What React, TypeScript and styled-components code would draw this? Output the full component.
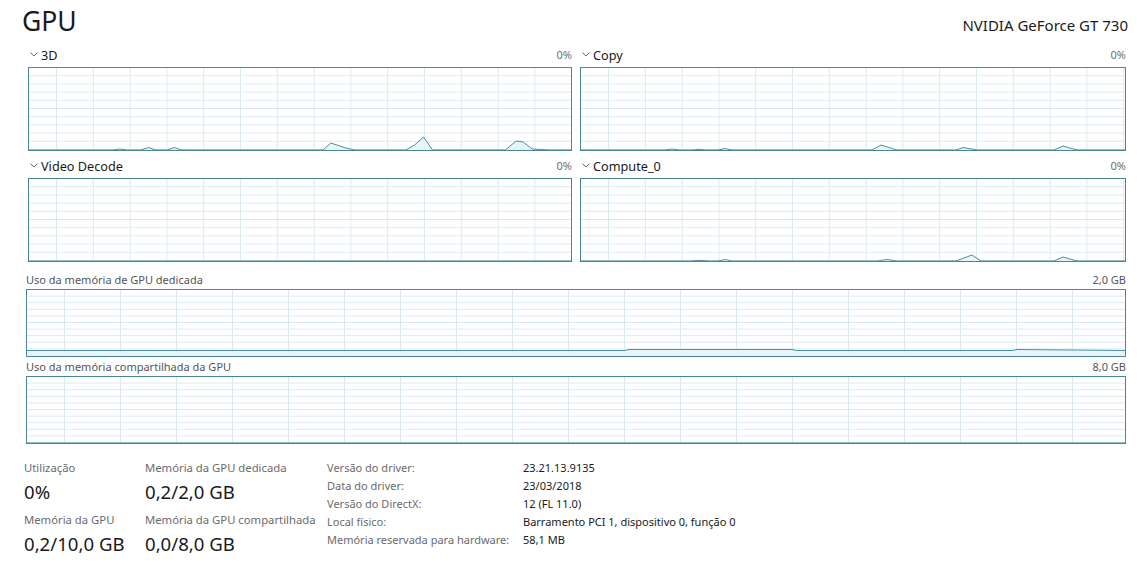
import React from 'react';
import styled, { createGlobalStyle } from 'styled-components';

const GlobalStyle = createGlobalStyle`
  html, body {
    margin: 0;
    padding: 0;
    background: #fff;
  }
  body {
    font-family: 'Segoe UI', 'Noto Sans', 'Open Sans', sans-serif;
    color: #1a1a1a;
  }
`;

const LINE = '#4f8d9c';
const BORDER = '#4a8794';
const GRID = '#dbe9ee';
const FILL = '#e3f3f7';

const Page = styled.div`
  width: 1137px;
  height: 585px;
  box-sizing: border-box;
  padding: 0 11px 0 22px;
  overflow: hidden;
`;

const Header = styled.div`
  display: flex;
  justify-content: space-between;
  align-items: flex-end;
  height: 38px;
  padding-top: 2px;
  box-sizing: border-box;
`;

const Title = styled.h1`
  margin: 0;
  font-size: 26.5px;
  line-height: 34px;
  font-weight: 400;
`;

const DeviceName = styled.div`
  font-size: 15px;
  line-height: 20px;
  margin: 0 -2px 3px 0;
  color: #1a1a1a;
`;

const EngineGrid = styled.div`
  display: grid;
  grid-template-columns: 544px 1fr;
  column-gap: 8px;
  row-gap: 6px;
  margin: 8px 0 0 6px;
`;

const Engine = styled.div`
  display: flex;
  flex-direction: column;
`;

const EngineHead = styled.div`
  display: flex;
  align-items: center;
  height: 17px;
  margin-bottom: 4px;
`;

const Chevron = styled.svg`
  width: 8px;
  height: 5px;
  margin: 0 3px 0 2px;
  flex: none;
`;

const EngineName = styled.span`
  flex: 1;
  font-size: 12.7px;
`;

const Percent = styled.span`
  font-size: 11px;
  color: #707070;
`;

const ChartBox = styled.div<{ $height: number; $col: number; $offset: number }>`
  height: ${p => p.$height}px;
  border: 1px solid ${BORDER};
  background-color: #fff;
  background-image:
    linear-gradient(to top, ${GRID} 1px, transparent 1px),
    linear-gradient(to right, ${GRID} 1px, transparent 1px);
  background-size: 100% 10%, ${p => p.$col}px 100%;
  background-position: 0 0, ${p => p.$offset}px 0;
`;

const Spark = styled.svg`
  display: block;
  width: 100%;
  height: 100%;
`;

const MemoryLabel = styled.div`
  display: flex;
  justify-content: space-between;
  font-size: 11px;
  line-height: 15px;
  color: #555;
  margin-bottom: 2px;
`;

const MemorySection = styled.div<{ $top: number }>`
  margin: ${p => p.$top}px 0 0 4px;
`;

const Stats = styled.div`
  display: flex;
  margin: 14px 0 0 2px;
`;

const StatColumn = styled.div<{ $width: number }>`
  width: ${p => p.$width}px;
  display: flex;
  flex-direction: column;
  gap: 6px;
  padding-top: 2px;
`;

const Stat = styled.div`
  display: flex;
  flex-direction: column;
`;

const StatLabel = styled.div`
  font-size: 11.3px;
  line-height: 16px;
  color: #6b6b6b;
`;

const StatValue = styled.div`
  font-size: 18.6px;
  line-height: 28px;
  margin-top: 2px;
  color: #1a1a1a;
`;

const Details = styled.div`
  display: grid;
  grid-template-columns: 196px auto;
  grid-auto-rows: 18px;
  align-items: center;
  font-size: 11px;
`;

const DetailKey = styled.div`
  color: #6b6b6b;
`;

const DetailValue = styled.div`
  color: #1a1a1a;
`;

type Pt = [number, number];

// one bump of the sparkline: [start, peak..., end] in px of the chart's inner box
const bump = (...pts: Pt[]): Pt[] => pts;

const Sparkline: React.FC<{ w: number; h: number; points: Pt[]; base?: number }> = ({ w, h, points, base = 0 }) => {
  const all: Pt[] = [[0, base], ...points, [w, base]];
  const line = all.map(([x, y]) => `${x},${h - y}`).join(' ');
  const area = `0,${h} ${line} ${w},${h}`;
  return (
    <Spark viewBox={`0 0 ${w} ${h}`} preserveAspectRatio="none">
      <polygon points={area} fill={FILL} fillOpacity={0.85} />
      <polyline points={line} fill="none" stroke={LINE} strokeWidth={1} vectorEffect="non-scaling-stroke" />
    </Spark>
  );
};

const engines: { name: string; points: Pt[] }[] = [
  {
    name: '3D',
    points: [
      ...bump([84, 0], [91, 1], [98, 0]),
      ...bump([112, 0], [120, 2.5], [127, 0]),
      ...bump([139, 0], [146, 2.5], [153, 0]),
      ...bump([295, 0], [303, 7], [318, 2], [327, 0]),
      ...bump([378, 0], [387, 5], [396, 13], [405, 0]),
      ...bump([478, 0], [489, 9], [496, 8], [505, 1], [523, 0]),
    ],
  },
  {
    name: 'Copy',
    points: [
      ...bump([84, 0], [91, 1], [98, 0]),
      ...bump([112, 0], [118, 0.7], [125, 0]),
      ...bump([137, 0], [144, 1.5], [151, 0]),
      ...bump([291, 0], [300, 5], [316, 0]),
      ...bump([375, 0], [382, 2.5], [396, 0]),
      ...bump([473, 0], [482, 4], [496, 0]),
    ],
  },
  { name: 'Video Decode', points: [] },
  {
    name: 'Compute_0',
    points: [
      ...bump([110, 0], [118, 0.7], [128, 0]),
      ...bump([137, 0], [144, 1.5], [151, 0]),
      ...bump([296, 0], [306, 1.5], [316, 0]),
      ...bump([375, 0], [391, 6], [400, 0]),
      ...bump([473, 0], [482, 4], [496, 0]),
    ],
  },
];

const dedicated: Pt[] = [
  [598, 5.5], [602, 6.5], [765, 6.5], [770, 5.5], [985, 5.5], [990, 6.5],
];

const details: [string, string][] = [
  ['Versão do driver:', '23.21.13.9135'],
  ['Data do driver:', '23/03/2018'],
  ['Versão do DirectX:', '12 (FL 11.0)'],
  ['Local físico:', 'Barramento PCI 1, dispositivo 0, função 0'],
  ['Memória reservada para hardware:', '58,1 MB'],
];

const App: React.FC = () => (
  <Page>
    <GlobalStyle />
    <Header>
      <Title>GPU</Title>
      <DeviceName>NVIDIA GeForce GT 730</DeviceName>
    </Header>

    <EngineGrid>
      {engines.map(e => (
        <Engine key={e.name}>
          <EngineHead>
            <Chevron viewBox="0 0 8 5">
              <path d="M0.5 0.5 L4 4 L7.5 0.5" fill="none" stroke="#666" strokeWidth="1" />
            </Chevron>
            <EngineName>{e.name}</EngineName>
            <Percent>0%</Percent>
          </EngineHead>
          <ChartBox $height={82} $col={36.8} $offset={27}>
            <Sparkline w={544} h={82} points={e.points} />
          </ChartBox>
        </Engine>
      ))}
    </EngineGrid>

    <MemorySection $top={10}>
      <MemoryLabel>
        <span>Uso da memória de GPU dedicada</span>
        <span>2,0 GB</span>
      </MemoryLabel>
      <ChartBox $height={66} $col={56} $offset={37}>
        <Sparkline w={1098} h={66} points={dedicated} base={5.5} />
      </ChartBox>
    </MemorySection>

    <MemorySection $top={2}>
      <MemoryLabel>
        <span>Uso da memória compartilhada da GPU</span>
        <span>8,0 GB</span>
      </MemoryLabel>
      <ChartBox $height={66} $col={56} $offset={37}>
        <Sparkline w={1098} h={66} points={[]} />
      </ChartBox>
    </MemorySection>

    <Stats>
      <StatColumn $width={121}>
        <Stat>
          <StatLabel>Utilização</StatLabel>
          <StatValue>0%</StatValue>
        </Stat>
        <Stat>
          <StatLabel>Memória da GPU</StatLabel>
          <StatValue>0,2/10,0 GB</StatValue>
        </Stat>
      </StatColumn>
      <StatColumn $width={182}>
        <Stat>
          <StatLabel>Memória da GPU dedicada</StatLabel>
          <StatValue>0,2/2,0 GB</StatValue>
        </Stat>
        <Stat>
          <StatLabel>Memória da GPU compartilhada</StatLabel>
          <StatValue>0,0/8,0 GB</StatValue>
        </Stat>
      </StatColumn>
      <Details>
        {details.map(([k, v]) => (
          <React.Fragment key={k}>
            <DetailKey>{k}</DetailKey>
            <DetailValue>{v}</DetailValue>
          </React.Fragment>
        ))}
      </Details>
    </Stats>
  </Page>
);

export default App;
